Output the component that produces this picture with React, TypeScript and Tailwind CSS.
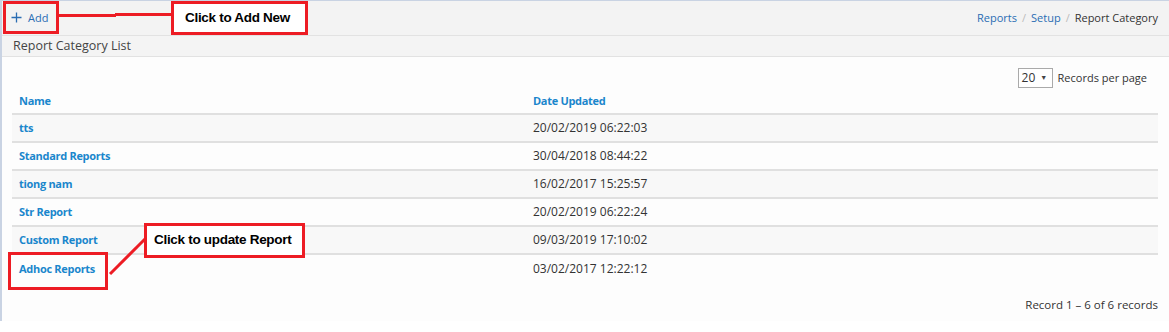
import React from "react";

const rows = [
  { name: "tts", date: "20/02/2019 06:22:03" },
  { name: "Standard Reports", date: "30/04/2018 08:44:22" },
  { name: "tiong nam", date: "16/02/2017 15:25:57" },
  { name: "Str Report", date: "20/02/2019 06:22:24" },
  { name: "Custom Report", date: "09/03/2019 17:10:02" },
  { name: "Adhoc Reports", date: "03/02/2017 12:22:12" },
];

export default function App() {
  return (
    <div className="relative w-[1169px] h-[332px] bg-white overflow-hidden font-['Open_Sans',sans-serif] text-[12px] text-[#333]">
      <div className="flex flex-col h-[321px] border-l-2 border-t border-l-[#c9d3e3] border-t-[#c9d3e3] bg-[#fdfdfd]">
        {/* header */}
        <div className="flex items-center justify-between h-[35px] shrink-0 bg-[#f3f3f3] border-b border-[#e2e2e2] pl-[9px] pr-[11px]">
          <div className="flex items-center gap-[6px] text-[#2a6db3] text-[11px]">
            <svg width="11" height="11" viewBox="0 0 11 11" className="mt-[-1px]">
              <path d="M5.5 0.5v10M0.5 5.5h10" stroke="#2a6db3" strokeWidth="1.3" />
            </svg>
            <span>Add</span>
          </div>
          <div className="flex items-center gap-[5px] text-[11px]">
            <span className="text-[#2a6db3]">Reports</span>
            <span className="text-[#bbb]">/</span>
            <span className="text-[#2a6db3]">Setup</span>
            <span className="text-[#bbb]">/</span>
            <span className="text-[#333]">Report Category</span>
          </div>
        </div>
        {/* title bar */}
        <div className="flex items-center h-[21px] shrink-0 bg-[#f4f4f4] border-b border-[#e2e2e2] pl-[11px] text-[12.5px] text-[#444]">
          Report Category List
        </div>
        {/* content */}
        <div className="flex flex-col pl-[10px] pr-[11px] pt-[11px]">
          <div className="flex items-center justify-end gap-[5px] pr-[11px] h-[20px] text-[11px]">
            <div className="flex items-center h-[20px] w-[35px] border border-[#aaa] bg-white pl-[3px] gap-[5px] text-[#333] text-[12px]">
              <span>20</span>
              <span className="text-[7px] text-[#444]">▼</span>
            </div>
            <span className="text-[#333]">Records per page</span>
          </div>
          <div className="flex flex-col mt-[1px] w-[1146px]">
            <div className="flex items-center h-[26px] border-b-2 border-[#e0e0e0] font-bold text-[#1a86cc]">
              <div className="w-[521px] pl-[7px] text-[11px] tracking-[-0.3px]">Name</div>
              <div className="text-[11px] tracking-[-0.3px]">Date Updated</div>
            </div>
            {rows.map((r, i) => (
              <div
                key={r.name}
                className={`flex items-center h-[28px] ${i < rows.length - 1 ? "border-b-2 border-[#e0e0e0]" : ""} ${i % 2 === 0 ? "bg-[#f8f8f8]" : "bg-[#fdfdfd]"}`}
              >
                <div className="w-[521px] pl-[7px] font-bold text-[11px] tracking-[-0.3px] text-[#1a86cc]">{r.name}</div>
                <div className="text-[#333]">{r.date}</div>
              </div>
            ))}
          </div>
          <div className="flex justify-end mt-[13px] w-[1146px] text-[11.5px] text-[#333]">Record 1 – 6 of 6 records</div>
        </div>
      </div>

      {/* annotations */}
      <div className="absolute left-[3px] top-[1px] w-[56px] h-[33px] border-[3px] border-[#ed1c24]" />
      <div className="absolute left-[58px] top-[14px] w-[58px] h-[3px] bg-[#ed1c24]" />
      <div className="absolute left-[115px] top-[13px] w-[57px] h-[3px] bg-[#ed1c24]" />
      <div className="absolute left-[171px] top-[1px] w-[137px] h-[34px] border-[3px] border-[#ed1c24] bg-white flex items-center pl-[11px] font-['Liberation_Sans',sans-serif] font-bold text-[13.5px] text-black tracking-[-0.3px]">
        Click to Add New
      </div>
      <div className="absolute left-[144px] top-[223px] w-[161px] h-[35px] border-[3px] border-[#ed1c24] bg-white flex items-start pt-[4px] pl-[7px] font-['Liberation_Sans',sans-serif] font-bold text-[13.5px] text-black tracking-[-0.3px]">
        Click to update Report
      </div>
      <div className="absolute left-[8px] top-[252px] w-[100px] h-[38px] border-[3px] border-[#ed1c24]" />
      <svg className="absolute left-0 top-0" width="1169" height="332">
        <line x1="110" y1="274" x2="146" y2="238" stroke="#ed1c24" strokeWidth="3" />
      </svg>
    </div>
  );
}
